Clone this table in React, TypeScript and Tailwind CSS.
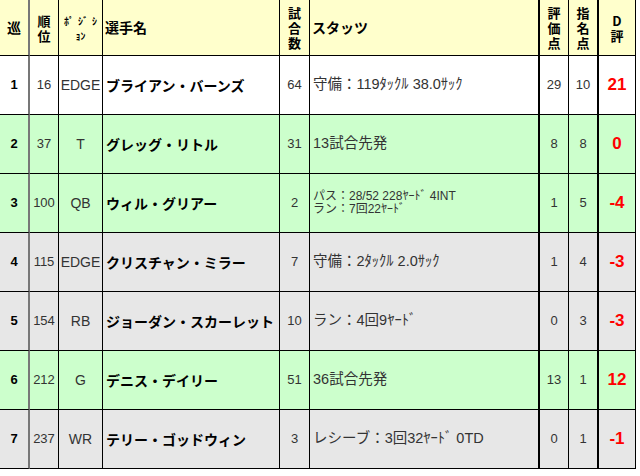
import React from "react";

type Row = {
  no: string;
  rank: string;
  pos: string;
  name: string;
  games: string;
  stats: string[];
  ev: string;
  pick: string;
  d: string;
  bg: string;
};

const rows: Row[] = [
  { no: "1", rank: "16", pos: "EDGE", name: "ブライアン・バーンズ", games: "64", stats: ["守備：119ﾀｯｸﾙ 38.0ｻｯｸ"], ev: "29", pick: "10", d: "21", bg: "bg-white" },
  { no: "2", rank: "37", pos: "T", name: "グレッグ・リトル", games: "31", stats: ["13試合先発"], ev: "8", pick: "8", d: "0", bg: "bg-[#ccffcc]" },
  { no: "3", rank: "100", pos: "QB", name: "ウィル・グリアー", games: "2", stats: ["パス：28/52 228ﾔｰﾄﾞ 4INT", "ラン：7回22ﾔｰﾄﾞ"], ev: "1", pick: "5", d: "-4", bg: "bg-[#ccffcc]" },
  { no: "4", rank: "115", pos: "EDGE", name: "クリスチャン・ミラー", games: "7", stats: ["守備：2ﾀｯｸﾙ 2.0ｻｯｸ"], ev: "1", pick: "4", d: "-3", bg: "bg-[#e7e7e7]" },
  { no: "5", rank: "154", pos: "RB", name: "ジョーダン・スカーレット", games: "10", stats: ["ラン：4回9ﾔｰﾄﾞ"], ev: "0", pick: "3", d: "-3", bg: "bg-[#e7e7e7]" },
  { no: "6", rank: "212", pos: "G", name: "デニス・デイリー", games: "51", stats: ["36試合先発"], ev: "13", pick: "1", d: "12", bg: "bg-[#ccffcc]" },
  { no: "7", rank: "237", pos: "WR", name: "テリー・ゴッドウィン", games: "3", stats: ["レシーブ：3回32ﾔｰﾄﾞ 0TD"], ev: "0", pick: "1", d: "-1", bg: "bg-[#e7e7e7]" },
];

const jp = "font-['Noto_Sans_CJK_JP',sans-serif]";
const num = "font-['Liberation_Sans','Noto_Sans_CJK_JP',sans-serif]";

export default function App() {
  const cell = "border-r border-b border-black flex items-center";
  const hd = `${cell} bg-[#ffffcc] ${jp} font-bold text-[13px] leading-[15px]`;
  return (
    <div className="w-[640px] h-[476px] bg-white overflow-hidden">
      <div className="grid grid-cols-[30px_29px_44px_177px_30px_230px_29px_30px_37px] grid-rows-[56px_repeat(7,59px)] w-[636px] text-black">
        {/* header */}
        <div className={`${hd} justify-center border-r-2 border-r-[#777] text-[14px]`}>巡</div>
        <div className={`${hd} justify-center text-center`}>順<br />位</div>
        <div className={`${cell} bg-[#ffffcc] justify-center flex-col ${jp} font-bold text-[10px] leading-[15px] text-center`}>
          <span className="tracking-[4px] ml-1">ﾎﾟｼﾞｼ</span>
          <span>ｮﾝ</span>
        </div>
        <div className={`${hd} pl-[2px] text-[14px]`}>選手名</div>
        <div className={`${hd} justify-center text-center`}>試<br />合<br />数</div>
        <div className={`${hd} pl-[2px] border-r-2 text-[14px]`}>スタッツ</div>
        <div className={`${hd} justify-center text-center`}>評<br />価<br />点</div>
        <div className={`${hd} justify-center border-r-2 text-center`}>指<br />名<br />点</div>
        <div className={`${hd} justify-center text-center`}>D<br />評</div>

        {rows.map((r) => (
          <React.Fragment key={r.no}>
            <div className={`${cell} ${r.bg} justify-center border-r-2 border-r-[#777] ${num} font-bold text-[13px]`}>{r.no}</div>
            <div className={`${cell} ${r.bg} justify-center ${num} text-[13px] text-[#333]`}>{r.rank}</div>
            <div className={`${cell} ${r.bg} justify-center ${num} text-[14px] text-[#333]`}>{r.pos}</div>
            <div className={`${cell} ${r.bg} pl-[3px] ${jp} font-bold text-[14px] whitespace-nowrap`}>{r.name}</div>
            <div className={`${cell} ${r.bg} justify-center ${num} text-[13px] text-[#333]`}>{r.games}</div>
            <div className={`${cell} ${r.bg} pl-[3px] border-r-2 ${num} text-[#333] whitespace-nowrap`}>
              {r.stats.length > 1 ? (
                <div className="flex flex-col text-[12px] leading-[13px]">
                  {r.stats.map((s) => (
                    <span key={s}>{s}</span>
                  ))}
                </div>
              ) : (
                <span className="text-[14.5px]">{r.stats[0]}</span>
              )}
            </div>
            <div className={`${cell} ${r.bg} justify-center ${num} text-[13px] text-[#333]`}>{r.ev}</div>
            <div className={`${cell} ${r.bg} justify-center border-r-2 ${num} text-[13px] text-[#333]`}>{r.pick}</div>
            <div className={`${cell} ${r.bg} justify-center ${num} font-bold text-[17px] text-[#ff0000]`}>{r.d}</div>
          </React.Fragment>
        ))}
      </div>
    </div>
  );
}
